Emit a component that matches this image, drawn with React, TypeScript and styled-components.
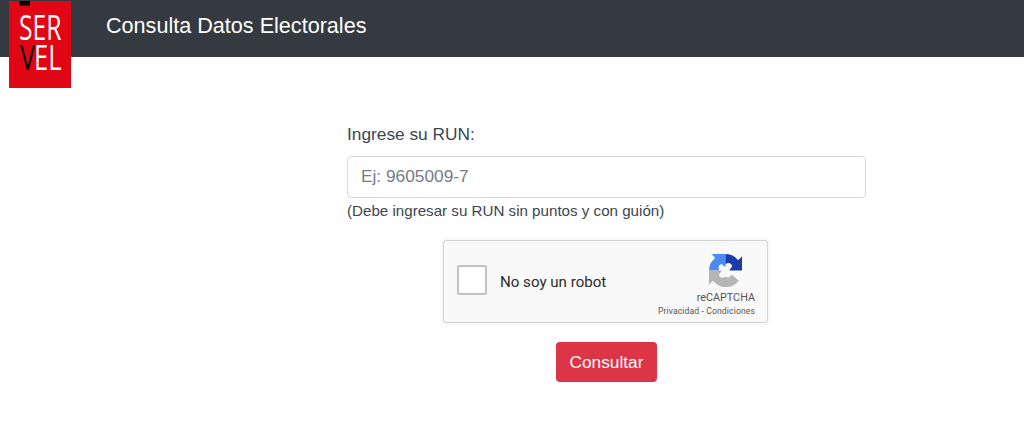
import { useState } from 'react';
import styled, { createGlobalStyle } from 'styled-components';

function ServelLogo() {
  return (
    <Logo viewBox="0 0 62 87" role="img" aria-label="Servel">
      <rect width="62" height="87" fill="#e00613" />
      <rect x="10.5" width="10.5" height="4.5" fill="#050000" />
      <text x="10" y="38.8" textLength="42.5" lengthAdjust="spacingAndGlyphs" fill="#fff">SER</text>
      <text x="11" y="69" textLength="15" lengthAdjust="spacingAndGlyphs" fill="#080000">V</text>
      <text x="25" y="69" textLength="27.5" lengthAdjust="spacingAndGlyphs" fill="#fff">EL</text>
      <rect x="9" y="77.5" width="45" height="1" fill="#cd0f19" />
    </Logo>
  );
}

function RecaptchaIcon() {
  return (
    <svg width="33" height="33" viewBox="0 0 32 32">
      <path fill="#4a8af4" d="M16 0H2.5L6 3.8A16 16 0 0 0 0 16H10.2C8.6 13.5 9.2 10.5 12 9.6L16 12.5Z" />
      <path fill="#1c3aa9" d="M32 16V2.5L28.2 6A16 16 0 0 0 16 0V10.2C18.5 7.6 22 8.8 22.4 12L19.5 16Z" />
      <path fill="#b5b5b5" d="M0 16V29.5L3.8 26A16 16 0 0 0 29 26L22 19.8C20.5 22.8 18 23.5 16 21.8C13.5 24 10 23 9.6 20L12.5 16Z" />
    </svg>
  );
}

function App() {
  const [run, setRun] = useState<string>('');
  const [checked, setChecked] = useState<boolean>(false);

  return (
    <>
      <GlobalStyle />
      <Header>
        <ServelLogo />
        <Title>Consulta Datos Electorales</Title>
      </Header>
      <Form onSubmit={(e) => e.preventDefault()}>
        <Label htmlFor="run">Ingrese su RUN:</Label>
        <Input id="run" placeholder="Ej: 9605009-7" value={run} onChange={(e) => setRun(e.target.value)} />
        <Help>(Debe ingresar su RUN sin puntos y con guión)</Help>
        <Captcha>
          <Checkbox type="checkbox" id="robot" checked={checked} onChange={() => setChecked(!checked)} />
          <CaptchaLabel htmlFor="robot">No soy un robot</CaptchaLabel>
          <Brand>
            <RecaptchaIcon />
            <BrandName>reCAPTCHA</BrandName>
            <Terms>Privacidad - Condiciones</Terms>
          </Brand>
        </Captcha>
        <Submit type="submit">Consultar</Submit>
      </Form>
    </>
  );
}

export default App;

const GlobalStyle = createGlobalStyle`
  * {
    box-sizing: border-box;
  }

  body {
    margin: 0;
    background: #fff;
    color: #3b4650;
    font-family: 'Liberation Sans', Arial, sans-serif;
  }
`;

const Header = styled.header`
  display: flex;
  align-items: flex-start;
  height: 57px;
  padding: 1px 8.5px 0;
  background: #343a40;
`;

/* taller than the bar, so it hangs below it */
const Logo = styled.svg`
  flex: none;
  width: 62px;
  height: 87px;
  overflow: visible;
  font-family: 'Open Sans', sans-serif;
  font-size: 34.5px;
  font-weight: 500;
`;

const Title = styled.h1`
  margin: 12px 0 0 35.5px;
  color: #fff;
  font-size: 21.6px;
  font-weight: 400;
  line-height: 26px;
`;

const Form = styled.form`
  display: flex;
  flex-direction: column;
  align-items: center;
  width: 519px;
  margin: 64px 0 0 347px;
`;

const Label = styled.label`
  align-self: flex-start;
  font-size: 17.3px;
  line-height: 26px;
`;

const Input = styled.input`
  width: 100%;
  height: 42px;
  margin-top: 9px;
  padding: 0 13px 2px;
  border: 1px solid #d3d8dd;
  border-radius: 4px;
  color: #495057;
  font-family: inherit;
  font-size: 17.3px;

  &::placeholder {
    color: #757c83;
    opacity: 1;
  }
`;

const Help = styled.small`
  align-self: flex-start;
  margin-top: 1px;
  font-size: 15.15px;
  line-height: 24px;
`;

const Captcha = styled.div`
  display: flex;
  align-items: center;
  width: 325px;
  height: 83px;
  margin: 17px 2px 0 0;
  padding: 0 12px 0 13px;
  border: 1px solid #d3d3d3;
  border-radius: 3px;
  background: #f9f9f9;
  box-shadow: 0 0 4px 1px rgba(0, 0, 0, 0.06);
  font-family: Roboto, sans-serif;
`;

const Checkbox = styled.input`
  appearance: none;
  width: 30px;
  height: 30px;
  margin: 0 0 4px;
  border: 2px solid #c1c1c1;
  border-radius: 2px;
  background: #fff;

  &:checked {
    border-color: #4285f4;
    background: #4285f4;
  }
`;

const CaptchaLabel = styled.label`
  margin-left: 13px;
  color: #2b2b2b;
  font-size: 15.1px;
`;

const Brand = styled.div`
  display: flex;
  flex-direction: column;
  align-items: flex-end;
  margin: 7px 0 0 auto;
  color: #555;

  svg {
    margin-right: 13px;
  }
`;

const BrandName = styled.div`
  margin: 5px 0 0;
  font-size: 10.8px;
  line-height: 12px;
`;

const Terms = styled.div`
  margin-top: 2px;
  font-size: 8.6px;
  letter-spacing: 0.12px;
  line-height: 11px;
`;

const Submit = styled.button`
  height: 40px;
  margin-top: 19px;
  padding: 0 14px;
  border: 0;
  border-radius: 4px;
  background: #dc3545;
  color: #fff;
  font-family: inherit;
  font-size: 17.3px;
`;
